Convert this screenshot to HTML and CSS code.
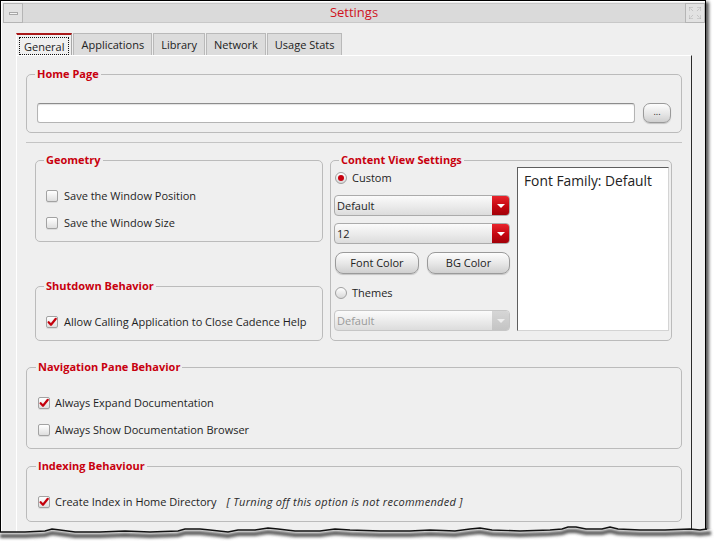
FILE: index.html
```html
<!DOCTYPE html>
<html>
<head>
<meta charset="utf-8">
<title>Settings</title>
<link rel="stylesheet" href="styles.css">
</head>
<body>
<div class="window">
  <div class="titlebar">
    <div class="tb-btn"><span class="dash"></span></div>
    <div class="tb-title">Settings</div>
    <div class="tb-btn">
      <svg width="18" height="18" viewBox="0 0 18 18"><g stroke="#b4b4b4" stroke-width="1" fill="none" stroke-dasharray="1 1"><path d="M3.5 3.5 L7.5 7.5 M3.5 3.5 H6.5 M3.5 3.5 V6.5"/><path d="M14.5 3.5 L10.5 7.5 M14.5 3.5 H11.5 M14.5 3.5 V6.5"/><path d="M3.5 14.5 L7.5 10.5 M3.5 14.5 H6.5 M3.5 14.5 V11.5"/><path d="M14.5 14.5 L10.5 10.5 M14.5 14.5 H11.5 M14.5 14.5 V11.5"/></g></svg>
    </div>
  </div>
  <div class="client">
    <div class="tabs">
      <div class="tab active"><span class="focus">General</span></div>
      <div class="tab">Applications</div>
      <div class="tab">Library</div>
      <div class="tab">Network</div>
      <div class="tab">Usage Stats</div>
    </div>
    <div class="pane">
      <div class="group home">
        <div class="gtitle">Home Page</div>
        <div class="home-row">
          <div class="input"></div>
          <div class="btn dots">...</div>
        </div>
      </div>
      <div class="sep"></div>
      <div class="cols">
        <div class="leftcol">
          <div class="group geometry">
            <div class="gtitle">Geometry</div>
            <div class="row first"><span class="cb"></span><span>Save the Window Position</span></div>
            <div class="row"><span class="cb"></span><span>Save the Window Size</span></div>
          </div>
          <div class="group shutdown">
            <div class="gtitle">Shutdown Behavior</div>
            <div class="row first"><span class="cb checked"><svg width="12" height="12" viewBox="0 0 12 12"><path d="M2.6 6.2 L5 8.8 L9.8 2.8" fill="none" stroke="#c4000c" stroke-width="2.2" stroke-linecap="round" stroke-linejoin="round"/></svg></span><span>Allow Calling Application to Close Cadence Help</span></div>
          </div>
        </div>
        <div class="group content">
          <div class="gtitle">Content View Settings</div>
          <div class="cv">
            <div class="cv-controls">
              <div class="row radio-row custom"><span class="radio on"></span><span>Custom</span></div>
              <div class="combo c1"><span class="ctext">Default</span><span class="arrow"></span></div>
              <div class="combo c2"><span class="ctext">12</span><span class="arrow"></span></div>
              <div class="btnrow">
                <div class="btn wide fc">Font Color</div>
                <div class="btn wide bg">BG Color</div>
              </div>
              <div class="row radio-row themes"><span class="radio"></span><span>Themes</span></div>
              <div class="combo c3 disabled"><span class="ctext">Default</span><span class="arrow"></span></div>
            </div>
            <div class="preview">Font Family: Default</div>
          </div>
        </div>
      </div>
      <div class="group nav">
        <div class="gtitle">Navigation Pane Behavior</div>
        <div class="row first"><span class="cb checked"><svg width="12" height="12" viewBox="0 0 12 12"><path d="M2.6 6.2 L5 8.8 L9.8 2.8" fill="none" stroke="#c4000c" stroke-width="2.2" stroke-linecap="round" stroke-linejoin="round"/></svg></span><span>Always Expand Documentation</span></div>
        <div class="row"><span class="cb"></span><span>Always Show Documentation Browser</span></div>
      </div>
      <div class="group index">
        <div class="gtitle">Indexing Behaviour</div>
        <div class="row first"><span class="cb checked"><svg width="12" height="12" viewBox="0 0 12 12"><path d="M2.6 6.2 L5 8.8 L9.8 2.8" fill="none" stroke="#c4000c" stroke-width="2.2" stroke-linecap="round" stroke-linejoin="round"/></svg></span><span>Create Index in Home Directory</span><span class="note">[ Turning off this option is not recommended ]</span></div>
      </div>
    </div>
  </div>
  <svg class="torn" width="718" height="25" viewBox="0 0 718 25">
    <defs>
      <filter id="blur" x="-5%" y="-100%" width="110%" height="300%"><feGaussianBlur stdDeviation="1.8"/></filter>
    </defs>
    <path fill="#fff" d="M0 12 L25 12 L45 11 L52 9 L60 10 L75 12 L100 12 L125 11 L150 12 L178 11 L185 9 L200 9 L210 10 L228 12 L238 10 L255 10 L268 8 L278 9 L295 11 L320 11 L335 9 L350 10 L380 11 L410 11 L430 10 L455 11 L470 9 L480 8 L492 10 L520 11 L550 10 L562 9 L568 7 L576 7 L586 9 L602 9 L610 7 L618 9 L640 10 L665 10 L690 9 L700 10 L718 9 L718 25 L0 25 Z"/>
    <path fill="none" stroke="#555" stroke-width="4" filter="url(#blur)" transform="translate(0 4)" d="M0 12 L25 12 L45 11 L52 9 L60 10 L75 12 L100 12 L125 11 L150 12 L178 11 L185 9 L200 9 L210 10 L228 12 L238 10 L255 10 L268 8 L278 9 L295 11 L320 11 L335 9 L350 10 L380 11 L410 11 L430 10 L455 11 L470 9 L480 8 L492 10 L520 11 L550 10 L562 9 L568 7 L576 7 L586 9 L602 9 L610 7 L618 9 L640 10 L665 10 L690 9 L700 10 L711 9"/>
    <path fill="none" stroke="#111" stroke-width="1.4" d="M0 12 L25 12 L45 11 L52 9 L60 10 L75 12 L100 12 L125 11 L150 12 L178 11 L185 9 L200 9 L210 10 L228 12 L238 10 L255 10 L268 8 L278 9 L295 11 L320 11 L335 9 L350 10 L380 11 L410 11 L430 10 L455 11 L470 9 L480 8 L492 10 L520 11 L550 10 L562 9 L568 7 L576 7 L586 9 L602 9 L610 7 L618 9 L640 10 L665 10 L690 9 L700 10 L707 9"/>
  </svg>
</div>
</body>
</html>
```
FILE: styles.css
```css
* { box-sizing: border-box; }
html, body { margin: 0; padding: 0; background: #fff; }
body {
  width: 716px; height: 544px; overflow: hidden;
  font-family: "Open Sans", "Noto Sans", sans-serif;
  font-size: 11px; color: #1e1e1e;
}
.window {
  position: relative;
  width: 706px; height: 544px;
  border: 1px solid #000; border-bottom: none;
  background: #efefef;
  box-shadow: inset 1px 1px 0 #fff, 3px 2px 3px rgba(0,0,0,0.65);
}
.titlebar {
  margin: 2px 0 0 2px;
  height: 20px;
  display: flex; align-items: stretch;
  background: #dadada;
}
.tb-btn {
  width: 20px; height: 20px;
  border: 1px solid #b5b5b5;
  background: #e2e2e2;
  display: flex; align-items: center; justify-content: center;
}
.dash { width: 9px; height: 3px; border: 1px solid #a8a8a8; background: #f4f4f4; }
.tb-title {
  flex: 1; text-align: center;
  font-size: 13px; line-height: 17px; color: #d0141e;
  border-top: 1px solid #c8c8c8; border-bottom: 1px solid #c8c8c8;
}
.client { padding: 10px 13px 0 15px; }
.tabs { display: flex; gap: 1px; height: 22px; }
.tab {
  height: 22px; line-height: 22px;
  padding: 0 7px;
  border: 1px solid #b9b9b9; border-bottom: none;
  background: #dcdcdc; color: #222;
}
.tab.active {
  padding: 2px 2px 0 2px;
  border-top: 2px solid #a81818;
  border-left: 1px solid #fff;
  border-right: 1px solid #a8a8a8;
  background: #efefef;
  line-height: 17px;
}
.focus { display: block; padding: 0 4px; border: 1px dotted #111; height: 18px; }
.pane {
  border-top: 1px solid #fff; border-left: 1px solid #fff; border-right: 1px solid #2a2a2a;
  padding: 18px 9px 0 9px;
  height: 489px;
}
.group {
  border: 1px solid #bbbbbb;
  border-radius: 5px;
  padding: 0 10px 10px 10px;
}
.gtitle {
  width: fit-content;
  margin: -8px 0 0 -2px; padding: 0 2px;
  background: #efefef;
  font-weight: 700; color: #c8000e;
  line-height: 14px;
}
.home { padding-bottom: 9px; }
.home-row { display: flex; gap: 8px; margin-top: 22px; }
.input {
  flex: 1; height: 20px; background: #fff;
  border: 1px solid #b4b4b4; border-top-color: #8c8c8c;
  border-radius: 3px;
  box-shadow: inset 0 1px 1px rgba(0,0,0,0.12);
}
.btn {
  border: 1px solid #9a9a9a;
  background: linear-gradient(#fdfdfd, #e6e6e6 55%, #cfcfcf);
  box-shadow: 0 1px 1px rgba(0,0,0,0.18);
  text-align: center; color: #222;
}
.dots { width: 28px; height: 20px; border-radius: 7px; font-size: 9px; line-height: 16px; }
.sep { margin-top: 9px; height: 1px; background: #c4c4c4; }
.cols { display: flex; gap: 7px; margin-top: 17px; padding: 0 10px 0 9px; }
.leftcol { width: 288px; flex: none; }
.row { display: flex; align-items: center; gap: 6px; height: 16px; line-height: 16px; margin-top: 11px; white-space: nowrap; }
.row.first { margin-top: 21px; }
.cb {
  width: 12px; height: 12px; flex: none;
  border: 1px solid #a2a2a2; border-radius: 2px;
  background: linear-gradient(#ffffff, #dedede);
  box-shadow: 0 1px 0 rgba(0,0,0,0.08);
  display: flex;
}
.cb svg { margin: -1px; }
.geometry, .shutdown { padding-bottom: 10px; }
.shutdown { margin-top: 44px; }
.content { flex: 1; padding: 0 2px 9px 3px; }
.content .gtitle { margin-left: 5px; }
.cv { display: flex; }
.cv-controls { width: 176px; flex: none; }
.radio-row { gap: 5px; }
.radio-row.custom { margin-top: 3px; }
.radio-row.themes { margin-top: 11px; }
.radio {
  width: 12px; height: 12px; flex: none; margin-left: 1px;
  border-radius: 50%; border: 1px solid #a0a0a0;
  background: linear-gradient(#ffffff, #d8d8d8);
  display: flex; align-items: center; justify-content: center;
}
.radio.on::after { content: ""; width: 6px; height: 6px; border-radius: 50%; background: #c8000e; }
.combo {
  display: flex; height: 21px;
  border: 1px solid #ababab; border-radius: 4px;
  background: linear-gradient(#fbfbfb, #ececec 50%, #dcdcdc);
  overflow: hidden;
}
.c1 { margin-top: 9px; }
.c2 { margin-top: 7px; }
.c3 { margin-top: 9px; }
.ctext { flex: 1; padding-left: 2px; line-height: 19px; }
.arrow {
  width: 17px; flex: none;
  background: linear-gradient(#e8242c, #c40610 55%, #a20008);
  display: flex; align-items: center; justify-content: center;
}
.arrow::after { content: ""; border-left: 4px solid transparent; border-right: 4px solid transparent; border-top: 4px solid #fff; margin-top: 1px; }
.disabled { border-color: #c6c6c6; }
.disabled .ctext { color: #9a9a9a; }
.disabled .arrow { background: linear-gradient(#d6d6d6, #c4c4c4); }
.disabled .arrow::after { border-top-color: #eee; }
.btnrow { display: flex; gap: 8px; margin-top: 8px; padding-left: 1px; }
.btn.wide { height: 22px; border-radius: 8px; line-height: 20px; }
.fc { width: 84px; }
.bg { width: 83px; }
.preview {
  flex: 1; margin-left: 7px; height: 164px;
  background: #fff;
  border: 1px solid; border-color: #5e5e5e #d4d4d4 #d4d4d4 #5e5e5e;
  padding: 3px 6px;
  font-size: 13.8px; line-height: 19px; color: #222;
}
.nav { margin-top: 26px; padding: 0 10px 10px 11px; }
.nav .row, .index .row { gap: 5px; }
.index { margin-top: 17px; padding: 0 10px 11px 11px; }
.note { font-style: italic; margin-left: 5px; color: #2a2a2a; letter-spacing: 0.3px; }
.torn { position: absolute; left: -1px; top: 519px; }
```
